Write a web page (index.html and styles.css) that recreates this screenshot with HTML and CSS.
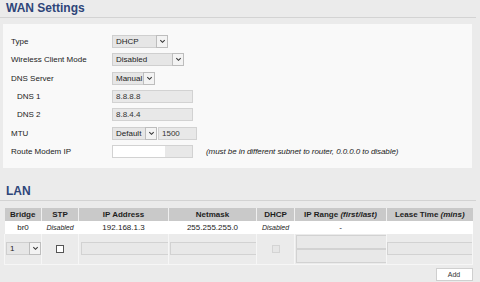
FILE: index.html
```html
<!DOCTYPE html>
<html lang="en">
<head>
    <meta charset="UTF-8">
    <title>WAN Settings</title>
    <link rel="stylesheet" href="styles.css">
</head>
<body>
    <h2 class="section-title">WAN Settings</h2>
    <div class="panel">
        <div class="field">
            <label>Type</label>
            <span class="select w56"><select><option>DHCP</option></select><span class="arrow"><svg viewBox="0 0 8 8"><path d="M1.5 2.5 L4 5 L6.5 2.5" /></svg></span></span>
        </div>
        <div class="field">
            <label>Wireless Client Mode</label>
            <span class="select w72"><select><option>Disabled</option></select><span class="arrow"><svg viewBox="0 0 8 8"><path d="M1.5 2.5 L4 5 L6.5 2.5" /></svg></span></span>
        </div>
        <div class="field">
            <label>DNS Server</label>
            <span class="select w43"><select><option>Manual</option></select><span class="arrow"><svg viewBox="0 0 8 8"><path d="M1.5 2.5 L4 5 L6.5 2.5" /></svg></span></span>
        </div>
        <div class="field">
            <label class="sub">DNS 1</label>
            <input class="text w81" type="text" value="8.8.8.8">
        </div>
        <div class="field">
            <label class="sub">DNS 2</label>
            <input class="text w81" type="text" value="8.8.4.4">
        </div>
        <div class="field">
            <label>MTU</label>
            <span class="select w45"><select><option>Default</option></select><span class="arrow"><svg viewBox="0 0 8 8"><path d="M1.5 2.5 L4 5 L6.5 2.5" /></svg></span></span>
            <input class="text w39 gap" type="text" value="1500">
        </div>
        <div class="field">
            <label>Route Modem IP</label>
            <input class="text w81 masked" type="text" value="">
            <span class="hint">(must be in different subnet to router, 0.0.0.0 to disable)</span>
        </div>
    </div>

    <h2 class="section-title lan-title">LAN</h2>
    <table class="lan-table">
        <colgroup>
            <col style="width:37px"><col style="width:37px"><col style="width:90px"><col style="width:88px">
            <col style="width:38px"><col style="width:92px"><col style="width:86px">
        </colgroup>
        <thead>
            <tr>
                <th>Bridge</th>
                <th>STP</th>
                <th>IP Address</th>
                <th>Netmask</th>
                <th>DHCP</th>
                <th>IP Range <i>(first/last)</i></th>
                <th>Lease Time <i>(mins)</i></th>
            </tr>
        </thead>
        <tbody>
            <tr class="data-row">
                <td>br0</td>
                <td><i class="small">Disabled</i></td>
                <td>192.168.1.3</td>
                <td>255.255.255.0</td>
                <td><i class="small">Disabled</i></td>
                <td>-</td>
                <td></td>
            </tr>
            <tr class="edit-row">
                <td class="left"><span class="select w35"><select><option>1</option></select><span class="arrow"><svg viewBox="0 0 8 8"><path d="M1.5 2.5 L4 5 L6.5 2.5" /></svg></span></span></td>
                <td><input class="check" type="checkbox"></td>
                <td class="left"><input class="text ip" type="text"></td>
                <td class="left"><input class="text mask" type="text"></td>
                <td><input class="check" type="checkbox" disabled></td>
                <td class="left stack">
                    <input class="text range" type="text">
                    <input class="text range" type="text">
                </td>
                <td class="left"><input class="text lease" type="text"></td>
            </tr>
            <tr class="add-row">
                <td colspan="7"><button type="button">Add</button></td>
            </tr>
        </tbody>
    </table>
</body>
</html>
```

FILE: styles.css
```css
body {
    margin: 0;
    background-color: #ebebeb;
    font-family: 'Liberation Sans', Arial, sans-serif;
    font-size: 8px;
    color: #222;
}

.section-title {
    margin: 0;
    width: 476px;
    height: 18px;
    box-sizing: border-box;
    padding-left: 6px;
    font-size: 12px;
    line-height: 16px;
    font-weight: bold;
    color: #2e4579;
    border-bottom: 1px solid #d3d3d3;
}

.panel {
    margin: 6px 0 0 3px;
    width: 469px;
    box-sizing: border-box;
    padding: 11px 8px 10px;
    background: #f9f9f9;
}

.field {
    display: flex;
    align-items: center;
    height: 13px;
    margin-bottom: 5.33px;
}

.field:last-child {
    margin-bottom: 0;
}

.field label {
    width: 101px;
    flex: none;
}

.field label.sub {
    padding-left: 6px;
    width: 95px;
}

.select {
    position: relative;
    display: inline-block;
    height: 13px;
    flex: none;
}

.select select {
    appearance: none;
    -webkit-appearance: none;
    width: 100%;
    height: 13px;
    margin: 0;
    padding: 0 0 0 3px;
    border: 1px solid #cfcfcf;
    background: #e6e6e6;
    font-family: inherit;
    font-size: 8px;
    color: #222;
    box-sizing: border-box;
    display: block;
}

.select .arrow {
    position: absolute;
    right: 0;
    top: 0;
    width: 12px;
    height: 13px;
    box-sizing: border-box;
    border: 1px solid #bdbdbd;
    background: #f3f3f3;
    pointer-events: none;
    display: flex;
    align-items: center;
    justify-content: center;
}

.select .arrow svg {
    width: 7px;
    height: 7px;
    fill: none;
    stroke: #333;
    stroke-width: 1.2;
}

.w56 { width: 56px; }
.w72 { width: 72px; }
.w43 { width: 43px; }
.w45 { width: 45px; }
.w35 { width: 35px; }
.w81 { width: 81px; }
.w39 { width: 39px; }

.text {
    height: 13px;
    margin: 0;
    padding: 0 0 0 3px;
    box-sizing: border-box;
    border: 1px solid #d2d2d2;
    background: #e8e8e8;
    font-family: inherit;
    font-size: 8px;
    color: #333;
    display: block;
    flex: none;
}

.gap {
    margin-left: 1px;
}

.masked {
    background: linear-gradient(to right, #fff 0, #fff 52px, #e8e8e8 52px);
}

.hint {
    margin-left: 13px;
    font-style: italic;
    white-space: nowrap;
    letter-spacing: -0.07px;
}

.lan-title {
    margin-top: 15px;
}

.lan-table {
    margin: 7px 0 0 4px;
    width: 468px;
    border-collapse: collapse;
    table-layout: fixed;
}

.lan-table th {
    height: 13px;
    padding: 0;
    background: #c9c9c9;
    font-weight: bold;
    font-size: 8px;
    color: #1e1e1e;
    border-left: 1px solid #efefef;
    white-space: nowrap;
}

.lan-table th:first-child {
    border-left: none;
}

.lan-table td {
    padding: 0;
    text-align: center;
    vertical-align: middle;
}

.data-row td {
    height: 13px;
    background: #fff;
}

.small {
    font-size: 7px;
}

.edit-row td {
    height: 30px;
    background: #ebebeb;
    border: 1px solid #f6f6f6;
    border-top: none;
}

.edit-row td.left {
    text-align: left;
}

.edit-row .select {
    margin-left: 1px;
    display: block;
}

.ip {
    width: 88px;
    margin-left: 2px;
}

.mask {
    width: 88px;
    margin-left: 1px;
}

.range {
    width: 91px;
    height: 14px;
    margin-left: 1px;
}

.lease {
    width: 86px;
}

.check {
    appearance: none;
    -webkit-appearance: none;
    width: 8px;
    height: 8px;
    margin: 0;
    border: 1px solid #555;
    background: #fff;
    display: inline-block;
    vertical-align: middle;
}

.check:disabled {
    border-color: #d4d4d4;
    background: #e6e6e6;
}

.add-row td {
    height: 18px;
    background: #ebebeb;
    border-top: 1px solid #f6f6f6;
    text-align: right;
    vertical-align: top;
}

.add-row button {
    margin-top: 3px;
    width: 37px;
    height: 13px;
    padding: 0;
    border: 1px solid #cfcfcf;
    background: #fff;
    font-family: inherit;
    font-size: 7px;
    color: #333;
    display: inline-block;
}
```
